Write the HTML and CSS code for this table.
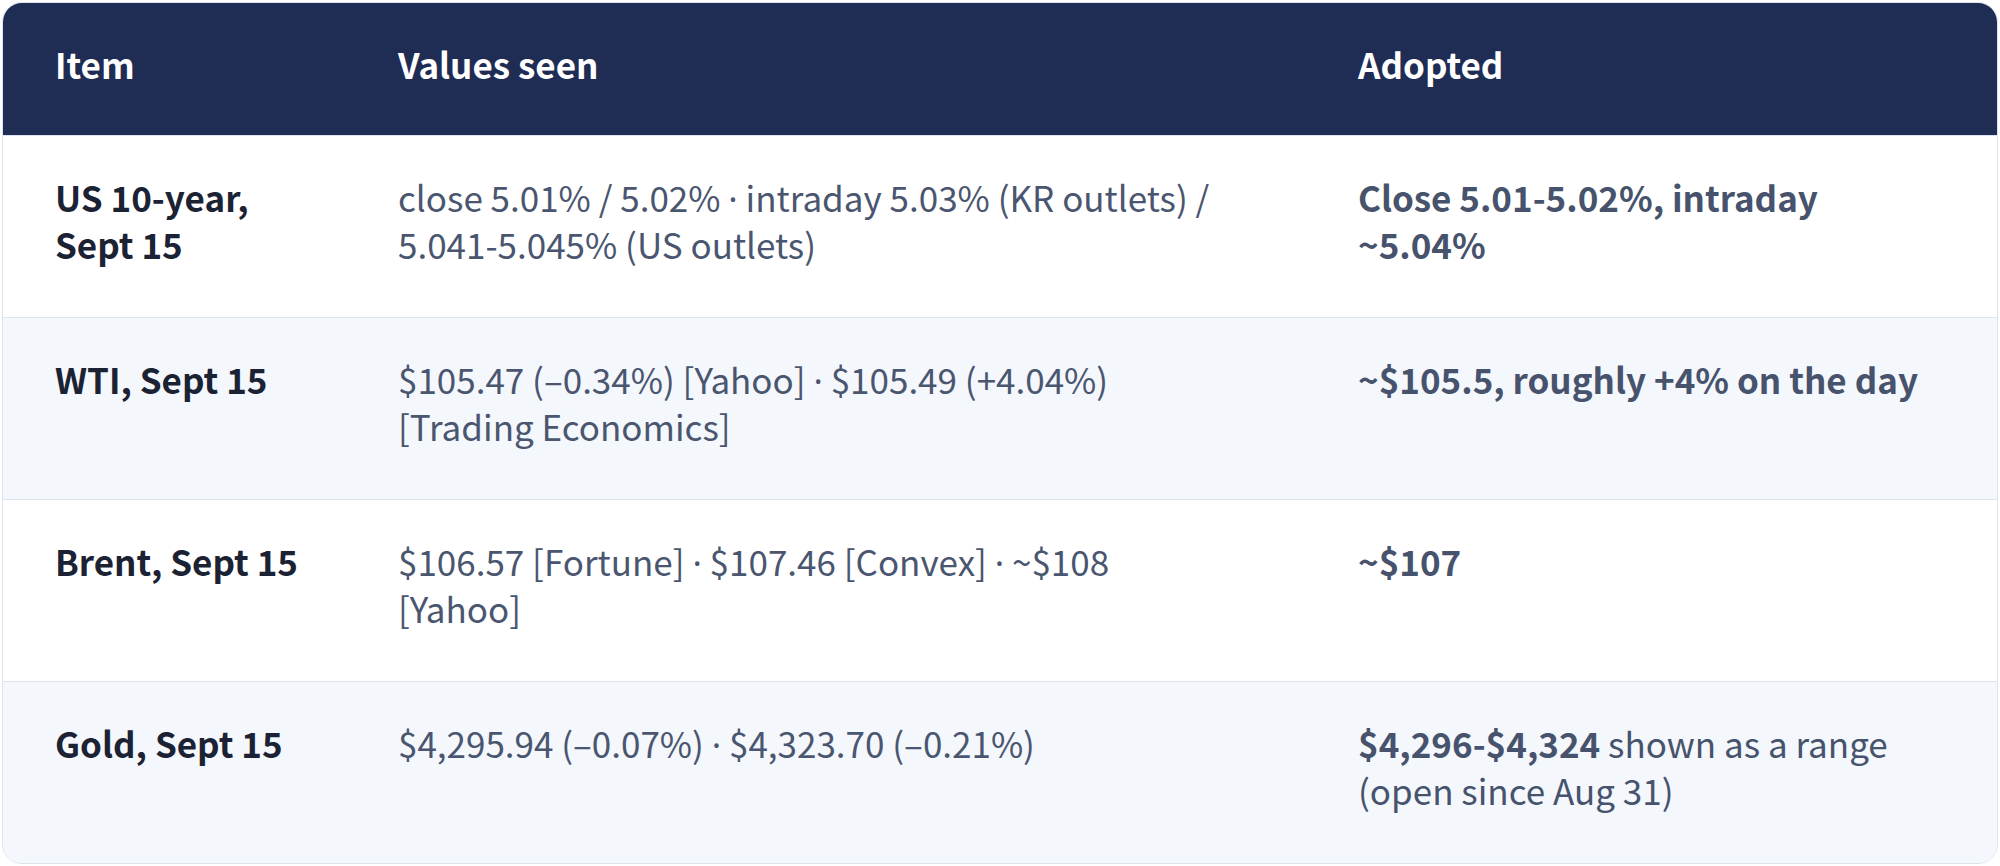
FILE: index.html
```html
<!DOCTYPE html>
<html lang="en">
<head>
<meta charset="utf-8">
<title>Adopted values</title>
<link rel="stylesheet" href="styles.css">
</head>
<body>
<div class="page">
  <div class="card">
    <table class="data">
      <colgroup>
        <col class="c-item">
        <col class="c-seen">
        <col class="c-adopted">
      </colgroup>
      <thead>
        <tr>
          <th class="item-h">Item</th>
          <th class="seen-h">Values seen</th>
          <th class="adopted-h">Adopted</th>
        </tr>
      </thead>
      <tbody>
        <tr>
          <td class="item">US 10-year, Sept 15</td>
          <td class="seen">close 5.01% / 5.02% <span class="sep">·</span> intraday 5.03% (KR outlets) / 5.041-5.045% (US outlets)</td>
          <td class="adopted"><strong>Close 5.01-5.02%, intraday ~5.04%</strong></td>
        </tr>
        <tr>
          <td class="item">WTI, Sept 15</td>
          <td class="seen">$105.47 (–0.34%) [Yahoo] <span class="sep">·</span> $105.49 (+4.04%) [Trading Economics]</td>
          <td class="adopted"><strong>~$105.5, roughly +4% on the day</strong></td>
        </tr>
        <tr>
          <td class="item">Brent, Sept 15</td>
          <td class="seen">$106.57 [Fortune] <span class="sep">·</span> $107.46 [Convex] <span class="sep">·</span> ~$108 [Yahoo]</td>
          <td class="adopted"><strong>~$107</strong></td>
        </tr>
        <tr>
          <td class="item">Gold, Sept 15</td>
          <td class="seen">$4,295.94 (–0.07%) <span class="sep">·</span> $4,323.70 (–0.21%)</td>
          <td class="adopted"><strong>$4,296-$4,324</strong> shown as a range (open since Aug 31)</td>
        </tr>
      </tbody>
    </table>
  </div>
</div>
</body>
</html>
```

FILE: styles.css
```css
html, body {
  margin: 0;
  padding: 0;
  background: #ffffff;
}

.page {
  padding: 2px;
  font-family: "Noto Sans CJK KR", "Noto Sans", sans-serif;
  font-size: 35px;
  line-height: 47px;
}

.card {
  border: 1px solid #dde4ef;
  border-radius: 20px;
  overflow: hidden;
  background: #ffffff;
}

.data {
  width: 100%;
  border-collapse: collapse;
  table-layout: fixed;
}

.c-item { width: 343px; }
.c-seen { width: 960px; }
.c-adopted { width: auto; }

.data th,
.data td {
  text-align: left;
  vertical-align: top;
  padding: 37px 60px 50px 52px;
}

.data th {
  background: #1f2c54;
  color: #ffffff;
  font-weight: 700;
  padding-bottom: 48px;
}

.data .item,
.data .item-h {
  padding-right: 36px;
}

.data .seen,
.data .seen-h {
  padding-right: 94px;
}

.data tbody tr {
  border-top: 1px solid #dde4ef;
}

.data tbody tr:nth-child(even) {
  background: #f4f7fc;
}

.item {
  color: #1b2233;
  font-weight: 700;
}

.seen {
  color: #4a566f;
  font-weight: 400;
}

.sep {
  font-family: "Noto Sans", sans-serif;
  line-height: 0;
}

.adopted {
  color: #47536c;
  font-weight: 400;
}

.adopted strong {
  font-weight: 700;
}
```
